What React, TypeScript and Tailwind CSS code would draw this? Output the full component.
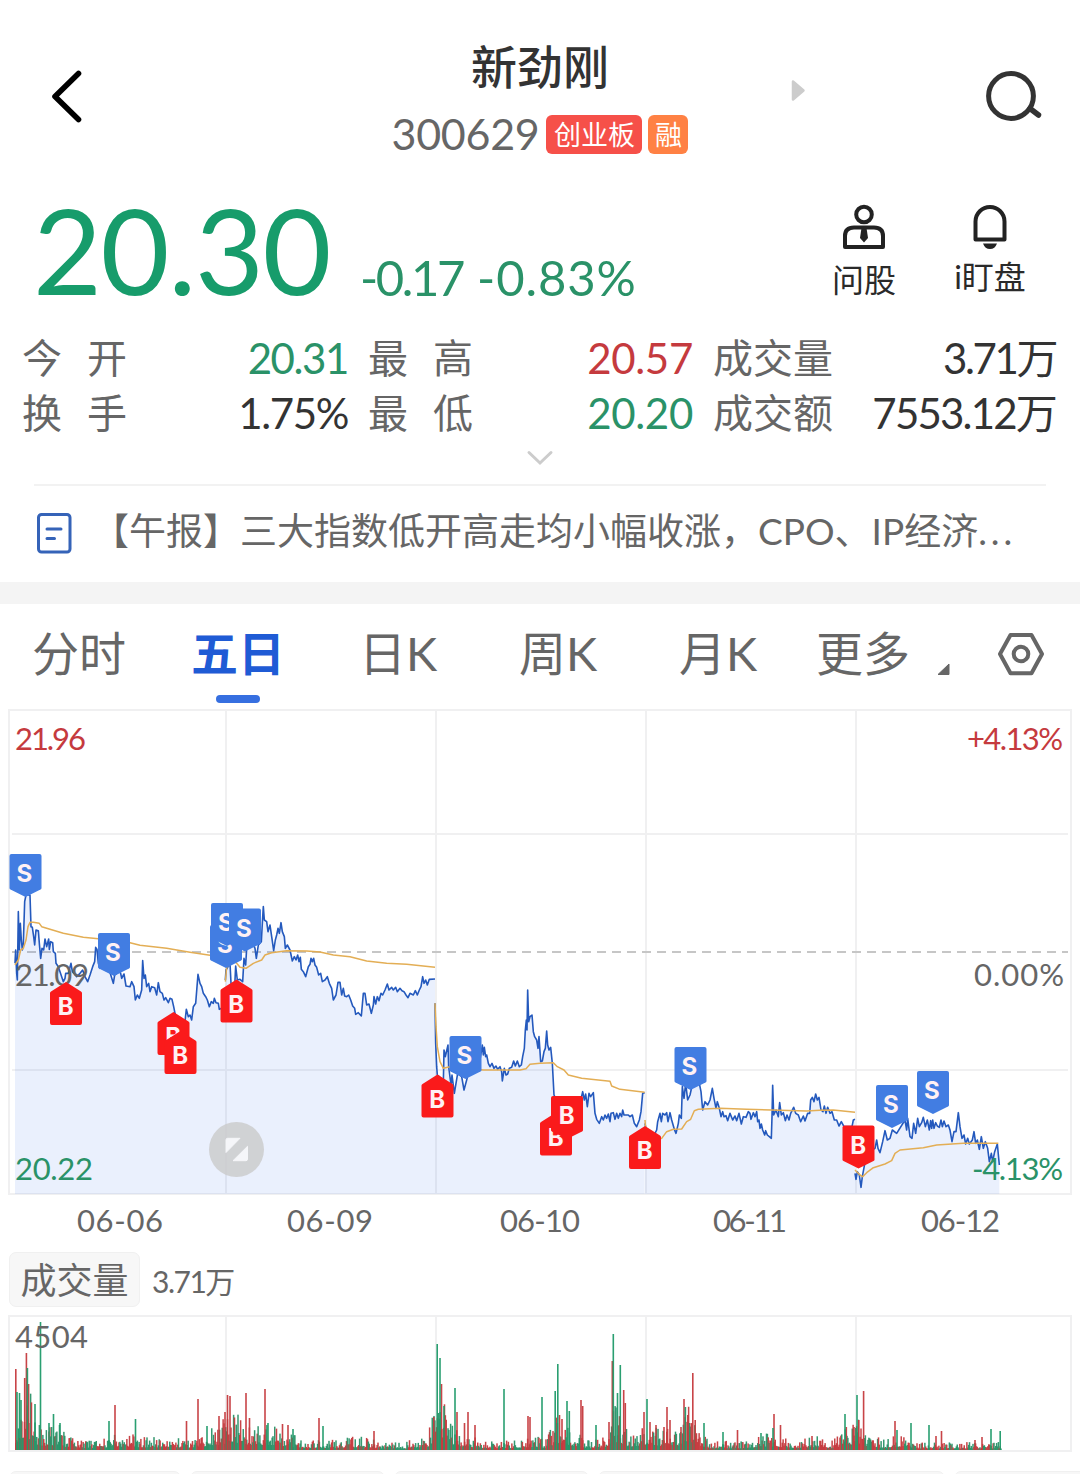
interface Segment {
  x: number;
  y: number;
  price: string;
  average: string;
}

interface Marker {
  x: number;
  y: number;
  side: "B" | "S";
  up?: boolean;
}

const GREEN = "#2a9268";
const RED = "#c53a3e";

// One entry per trading day, points are in thirds of a pixel from x / y
const segments: Segment[] = [
  {
    x: 0,
    y: 840,
    price:
      "45,370 47,330 50,400 52,420 55,215 58,330 61,250 64,300 67,330 70,310 74,185 78,165 90,165 93,260 97,262 101,290 104,315 108,270 115,272 118,310 122,355 126,325 131,330 135,297 140,320 146,297 148,328 152,305 158,308 160,335 166,340 168,370 175,380 180,395 185,410 190,425 195,415 197,400 205,400 213,370 217,395 222,400 230,410 240,400 248,390 255,410 263,425 270,405 278,380 284,365 287,322 291,328 295,370 300,385 305,350 312,340 340,430 344,405 358,395 362,400 365,415 372,402 378,438 390,440 395,425 402,440 406,480 412,465 418,475 425,450 428,362 432,415 436,405 440,440 446,430 450,455 455,440 464,443 470,465 475,428 480,455 487,460 492,480 497,473 505,488 510,475 516,478 521,500 525,520 540,560 555,545 559,508 565,530 570,525 575,540 580,500 587,490 594,403 600,430 605,440 610,460 617,470 622,480 628,500 634,485 640,490 643,475 648,488 655,490 658,508 665,505 676,500",
    average:
      "45,375 55,360 62,330 70,325 78,300 84,260 90,247 100,247 118,250 125,260 150,268 190,280 250,292 295,296 390,308 420,316 500,325 570,337 630,346 676,350",
  },
  {
    x: 200,
    y: 880,
    price:
      "76,300 78,270 90,250 93,310 104,320 107,258 112,300 120,298 128,305 132,235 137,255 140,205 150,170 165,205 169,235 175,195 184,185 187,130 190,80 193,120 200,125 204,155 210,135 215,170 221,212 226,180 230,165 234,145 238,160 243,128 247,155 253,170 256,205 262,195 270,210 277,243 283,230 288,240 293,225 297,245 301,232 304,268 310,275 317,290 325,260 330,253 333,235 337,245 341,235 345,255 350,262 356,285 362,280 367,305 375,300 382,290 388,310 395,325 400,360 408,345 414,307 420,307 425,345 430,325 434,348 440,350 446,345 452,360 458,378 464,385 467,403 475,398 484,408 490,340 495,340 500,375 507,372 514,400 520,375 522,350 527,372 532,350 537,362 543,340 548,345 555,330 562,312 567,330 575,322 580,330 587,322 592,335 600,325 606,332 612,335 618,345 624,353 630,340 640,345 646,332 652,345 658,330 663,320 668,290 672,310 677,300 682,315 688,298 705,297",
    average:
      "76,305 80,262 100,240 112,252 120,262 138,265 160,250 185,240 195,225 215,218 260,212 320,213 360,216 400,225 450,230 500,243 560,250 620,253 705,262",
  },
  {
    x: 420,
    y: 960,
    price:
      "45,130 47,250 50,320 52,345 58,350 70,370 72,270 76,290 84,255 86,320 93,375 96,345 103,400 108,370 113,340 125,350 132,390 140,360 150,320 165,290 180,300 187,255 190,285 193,262 197,290 200,285 205,310 210,320 216,310 222,325 228,318 233,328 240,320 245,335 247,363 253,325 258,345 263,342 268,325 275,322 281,303 286,318 292,303 298,320 304,315 308,290 313,265 316,210 319,180 321,210 323,90 326,185 330,170 336,165 340,215 344,230 350,240 354,265 357,230 362,305 367,303 372,275 376,265 380,213 383,255 387,270 392,262 397,310 402,405 420,440 480,430 488,395 493,420 497,402 502,440 507,400 512,410 520,398 525,460 530,478 538,490 545,470 550,480 555,465 560,475 565,462 570,485 573,460 580,458 585,478 590,460 595,475 600,460 605,470 608,450 612,465 625,465 630,470 637,465 643,490 650,500 658,480 663,455 668,400 674,398",
    average:
      "45,130 48,200 52,260 60,305 70,325 90,320 190,330 300,330 318,326 330,313 360,310 400,308 412,320 432,330 445,345 485,355 570,364 575,378 600,388 674,397",
  },
  {
    x: 640,
    y: 1020,
    price:
      "15,310 25,370 40,350 50,330 53,305 60,280 64,305 68,280 75,285 80,278 84,305 90,278 95,300 103,328 108,340 115,310 118,285 124,295 127,200 132,235 137,190 143,240 150,225 160,180 178,190 183,215 188,270 195,245 203,255 210,240 217,205 222,235 228,265 232,245 238,265 243,290 248,275 252,290 258,287 263,302 270,280 278,300 285,288 290,302 297,280 304,312 310,290 318,292 325,275 330,280 333,298 340,278 345,290 350,275 353,305 357,300 360,325 364,312 368,330 374,345 377,332 382,345 388,350 394,355 396,290 398,196 401,285 408,270 415,290 419,248 424,285 430,278 436,302 441,285 447,300 452,280 461,262 467,280 475,285 482,305 490,288 495,303 503,280 509,280 512,240 517,232 522,245 527,222 532,240 537,232 543,270 549,275 553,258 558,280 563,262 570,280 576,275 583,300 590,300 597,318 604,305 612,320 636,320 640,300 645,298",
    average:
      "15,300 20,370 40,365 65,355 80,335 100,328 125,327 140,305 152,298 163,272 175,268 240,265 320,268 420,271 500,273 540,271 580,270 645,277",
  },
  {
    x: 640,
    y: 1020,
    price:
      "645,460 648,478 652,455 658,465 663,502 667,470 680,400 705,385 710,360 714,385 720,398 728,365 735,332 742,360 750,355 757,330 770,340 795,300 800,330 803,295 810,350 816,355 821,310 827,340 833,295 838,320 845,308 850,292 856,320 862,300 868,330 872,302 875,325 878,300 882,325 887,308 892,318 898,322 903,300 907,320 912,303 918,320 925,315 930,330 936,365 942,335 948,335 955,278 960,320 966,355 972,345 977,372 983,355 988,372 997,360 1002,335 1007,370 1012,360 1018,388 1024,350 1030,385 1036,365 1043,385 1048,425 1054,400 1058,425 1064,395 1072,372 1078,435",
    average:
      "645,450 660,465 668,470 680,458 700,443 735,432 755,422 765,400 780,390 850,383 890,375 970,370 1075,370",
  },
];

const markers: Marker[] = [
  { x: 9.5, y: 854, side: "S" },
  { x: 98, y: 933, side: "S" },
  { x: 50, y: 982, side: "B", up: true },
  { x: 157.5, y: 1012, side: "B", up: true },
  { x: 164.5, y: 1031, side: "B", up: true },
  { x: 210, y: 925, side: "S" },
  { x: 211, y: 903, side: "S" },
  { x: 229, y: 908.5, side: "S" },
  { x: 220.5, y: 979.5, side: "B", up: true },
  { x: 421.5, y: 1074.5, side: "B", up: true },
  { x: 449.5, y: 1036, side: "S" },
  { x: 540, y: 1112.5, side: "B", up: true },
  { x: 551, y: 1096, side: "B" },
  { x: 629, y: 1126, side: "B", up: true },
  { x: 674.5, y: 1047, side: "S" },
  { x: 842.5, y: 1125.5, side: "B" },
  { x: 876, y: 1085, side: "S" },
  { x: 917, y: 1071, side: "S" },
];

// x:height of the usual volume, interpolated between the stops
const volumeLevels: [number, number][] = [
  [15, 28], [22, 44], [30, 42], [37, 20], [45, 16], [60, 20], [66, 11], [90, 7], [120, 13], [150, 10], [195, 9],
  [218, 20], [224, 24], [231, 34], [245, 20], [270, 20], [290, 12], [310, 7], [340, 9], [360, 11], [380, 6], [405, 6],
  [428, 14], [436, 46], [442, 50], [450, 20], [462, 14], [482, 8], [510, 7], [532, 12], [545, 8], [558, 28], [572, 16],
  [588, 7], [605, 10], [614, 34], [625, 16], [636, 12], [648, 24], [660, 16], [680, 18], [688, 34], [698, 16], [710, 7],
  [740, 7], [775, 14], [790, 7], [808, 10], [815, 12], [830, 7], [846, 17], [857, 28], [868, 12], [885, 8], [897, 13],
  [915, 6], [950, 6], [985, 6], [1001, 6],
];

const greenSpikes: [number, number][] = [
  [17, 58], [19.5, 57], [21, 50], [27.4, 82], [35, 46], [40.5, 128], [49, 27], [53.5, 36], [60, 27], [109, 29],
  [135.5, 31], [207, 24], [268, 27], [293, 21], [323, 24], [437.2, 106], [440, 92], [444, 44], [455, 62], [504, 61],
  [542, 53], [555.2, 59], [557.8, 86], [567, 49], [569.3, 39], [596, 25], [613.3, 116], [617.5, 57], [620.3, 85],
  [647, 51], [685.4, 43], [704, 27], [723, 18], [761, 17], [773, 22], [845, 36], [857, 55], [897, 20], [911, 27],
  [929, 25], [991, 21], [1000.2, 19],
];

const redSpikes: [number, number][] = [
  [15.8, 81], [24.7, 72], [26.4, 97], [28.6, 66], [115, 45], [186.5, 29], [198, 51], [219, 34], [225, 38], [227.5, 55],
  [230, 54], [246, 57], [249.5, 32], [265, 61], [282.5, 26], [288, 25], [319, 32], [374, 19], [433.8, 33], [441.5, 66],
  [457, 38], [464.5, 27], [468, 38], [475, 25], [528, 34], [530, 33], [559.5, 35], [562, 31], [581, 50], [582.7, 44],
  [609, 28], [612.3, 89], [623.7, 60], [625.3, 47], [644, 38], [650, 28], [656, 25], [664, 23], [667, 43], [670, 30],
  [681, 23], [684, 51], [687.8, 35], [692.8, 77], [695.2, 30], [737.5, 20], [774, 36], [780.5, 25], [812, 14], [846.3, 23],
  [854, 23], [858.8, 30], [863.6, 59], [895, 29], [936, 14], [941.5, 19], [975, 10], [982, 13],
];

function scale(points: string, x: number, y: number) {
  return points
    .split(" ")
    .map((p) => {
      const [px, py] = p.split(",").map(Number);
      return `${(x + px / 3).toFixed(2)},${(y + py / 3).toFixed(2)}`;
    })
    .join(" ");
}

function levelAt(x: number) {
  for (let i = 1; i < volumeLevels.length; i++) {
    const [x1, h1] = volumeLevels[i];
    const [x0, h0] = volumeLevels[i - 1];
    if (x <= x1) return h0 + ((h1 - h0) * (x - x0)) / (x1 - x0);
  }
  return 5;
}

function minuteBars() {
  const bars: { x: number; h: number; color: string }[] = [];
  let seed = 629;
  const next = () => {
    seed = (seed * 16807) % 2147483647;
    return seed / 2147483647;
  };
  let red = false;
  for (let x = 15; x < 1001; x += 0.875) {
    const r = next();
    if (next() > 0.6) red = !red;
    bars.push({ x, h: Math.max(1.5, levelAt(x) * (0.25 + 1.1 * r * r)), color: red ? RED : GREEN });
  }
  return bars;
}

function ArrowMarker({ x, y, side, up }: Marker) {
  return (
    <g transform={`translate(${x} ${y})`}>
      <path
        d={
          up
            ? "M16 0L31 9.5Q32 10 32 11V41Q32 43 30 43H2Q0 43 0 41V11Q0 10 1 9.5Z"
            : "M16 43L31 35.5Q32 35 32 34V2Q32 0 30 0H2Q0 0 0 2V34Q0 35 1 35.5Z"
        }
        fill={side === "B" ? "#fa1a1b" : "#427de2"}
      />
      <text
        x={side === "B" ? 15.8 : 14.8}
        y={up ? 33 : 28}
        textAnchor="middle"
        fontSize="24"
        className="fill-[#fff1f4] font-[Inter,sans-serif] font-bold"
      >
        {side}
      </text>
    </g>
  );
}

function PriceChart() {
  return (
    <svg className="block h-[536px] w-full" viewBox="0 708 1080 536">
      <g fill="none" stroke="#f0f0f1" strokeWidth="2">
        <rect x="9" y="710" width="1062" height="484" />
        <path d="M12 834H1068M12 1070H1068" />
        <path d="M226 710V1194M436 710V1194M646 710V1194M856 710V1194" />
      </g>
      <path d="M12 952H1068" stroke="#c6c6c6" strokeWidth="1.8" strokeDasharray="9 6" />
      {segments.map((s, i) => {
        const line = scale(s.price, s.x, s.y);
        const pts = line.split(" ");
        const start = pts[0].split(",")[0];
        const end = pts[pts.length - 1].split(",")[0];
        return (
          <g key={i} fill="none" strokeLinejoin="round">
            <polygon points={`${start},1194 ${line} ${end},1194`} fill="#3a6ff0" fillOpacity="0.105" />
            <polyline points={line} stroke="#2459bd" strokeWidth="1.6" />
            <polyline points={scale(s.average, s.x, s.y)} stroke="#e3ae55" strokeWidth="1.5" />
          </g>
        );
      })}
      <g fontSize="31" fill="#666">
        <text x="15" y="750" textLength="71" fill={RED}>21.96</text>
        <text x="967" y="750" textLength="96" fill={RED}>+4.13%</text>
        <text x="15" y="986" textLength="74">21.09</text>
        <text x="974" y="986" textLength="90">0.00%</text>
        <text x="15" y="1180" textLength="78" fill={GREEN}>20.22</text>
        <text x="972" y="1180" textLength="91" fill={GREEN}>-4.13%</text>
        <text x="77" y="1232" textLength="86">06-06</text>
        <text x="287" y="1232" textLength="86">06-09</text>
        <text x="500" y="1232" textLength="80">06-10</text>
        <text x="713" y="1232" textLength="74">06-11</text>
        <text x="921" y="1232" textLength="79">06-12</text>
      </g>
      {markers.map((m, i) => (
        <ArrowMarker key={i} {...m} />
      ))}
      <circle cx="236.5" cy="1149.5" r="27.5" fill="#cbcbcb" fillOpacity="0.82" />
      <path
        d="M227.5 1138.3H240L226 1152.5V1139.8Q226 1138.3 227.5 1138.3ZM247.5 1146.3V1159Q247.5 1160.7 246 1160.7H233Z"
        fill="#f5f6f9"
        stroke="#f5f6f9"
        strokeLinejoin="round"
      />
    </svg>
  );
}

function VolumeChart() {
  return (
    <svg className="block h-[140px] w-full" viewBox="0 1314 1080 140">
      <g fill="none" stroke="#f0f0f1" strokeWidth="2">
        <rect x="9" y="1316" width="1062" height="135" />
        <path d="M226 1316V1451M436 1316V1451M646 1316V1451M856 1316V1451" />
      </g>
      {minuteBars().map((b, i) => (
        <rect key={i} x={b.x} y={1450 - b.h} width="1.5" height={b.h} fill={b.color} fillOpacity="0.95" />
      ))}
      {redSpikes.map(([x, h]) => (
        <rect key={x} x={x - 0.8} y={1450 - h} width="1.6" height={h} fill={RED} fillOpacity="0.95" />
      ))}
      {greenSpikes.map(([x, h]) => (
        <rect key={x} x={x - 0.8} y={1450 - h} width="1.6" height={h} fill="#1f9a69" fillOpacity="0.95" />
      ))}
      <text x="15" y="1348" fontSize="31" textLength="73" fill="#666">
        4504
      </text>
    </svg>
  );
}

function Header() {
  return (
    <header className="flex h-[180px] items-start justify-between">
      <svg className="mt-[66px] ml-[48px] h-[62px] w-[40px]" viewBox="0 0 40 62" fill="none">
        <path d="M30.5 7.5L7 30.5L30.5 53.5" stroke="#000" strokeWidth="5.6" strokeLinecap="round" strokeLinejoin="round" />
      </svg>
      <div className="ml-[304px] flex w-[296px] shrink-0 flex-col items-center pt-[38px]">
        <h1 className="text-[46px] leading-[58px] font-medium text-[#333]">新劲刚</h1>
        <div className="mt-[16px] flex h-[44px] items-center">
          <span className="mr-[7px] text-[43px] leading-[44px] tracking-[-0.3px] text-[#666]">300629</span>
          <span className="mr-[6px] flex h-[39px] w-[96px] items-center justify-center rounded-[6px] bg-[#f65049] text-[27px] leading-none text-white">
            创业板
          </span>
          <span className="flex h-[39px] w-[40px] items-center justify-center rounded-[6px] bg-[#ff8144] text-[27px] leading-none text-white">
            融
          </span>
        </div>
      </div>
      <svg className="mt-[78px] ml-[103px] h-[25px] w-[16px]" viewBox="0 0 16 25">
        <path d="M2 3.5L12.5 12.5L2 21.5Z" fill="#ccc" stroke="#ccc" strokeWidth="2.5" strokeLinejoin="round" />
      </svg>
      <svg className="mt-[66px] mr-[34px] ml-auto h-[62px] w-[64px]" viewBox="0 0 64 62" fill="none" stroke="#333">
        <circle cx="29" cy="30" r="22.4" strokeWidth="5" />
        <path d="M48 42.5L56.5 49" strokeWidth="5.5" strokeLinecap="round" />
      </svg>
    </header>
  );
}

function Quote() {
  return (
    <section className="flex h-[150px] items-start">
      <div className="w-[326px] pt-[9px] pl-[33px] text-[119px] leading-[120px] tracking-[-1.4px] whitespace-nowrap text-[#179c6b]">20.30</div>
      <div className="mt-[67px] ml-[34px] flex w-[300px] gap-[14px] text-[49px] leading-[60px] whitespace-nowrap text-[#2a9268]">
        <span className="tracking-[-2.4px]">-0.17</span>
        <span className="tracking-[0.9px]">-0.83%</span>
      </div>
      <div className="ml-auto flex pr-[42px] text-[#2a2a2a]">
        <div className="flex w-[96px] flex-col items-center pt-[23px]">
          <svg className="h-[48px] w-[46px]" viewBox="0 0 46 48" fill="none" stroke="#222" strokeWidth="4">
            <circle cx="23" cy="11.5" r="7.8" />
            <path d="M4 44V33Q4 24.500 13 24.500H33Q42 24.500 42 33V44Z" strokeLinejoin="round" />
            <path d="M20.500 25H25.500L27 35L23 39.500L19 35Z" fill="#222" stroke="none" />
          </svg>
          <span className="mt-[9px] text-[32px] leading-[40px]">问股</span>
        </div>
        <div className="ml-[30px] flex w-[96px] flex-col items-center pt-[23px]">
          <svg className="h-[46px] w-[40px]" viewBox="0 0 40 46" fill="none" stroke="#222" strokeWidth="4">
            <path d="M5.500 36.500V18.500A14.500 14.500 0 0 1 34.500 18.500V36.500Z" strokeLinejoin="round" />
            <path d="M13 40.500H27Q25 46 20 46Q15 46 13 40.500Z" fill="#222" stroke="none" />
          </svg>
          <span className="mt-[8px] text-[32px] leading-[40px] whitespace-nowrap">i盯盘</span>
        </div>
      </div>
    </section>
  );
}

interface StatProps {
  label: string;
  value: string;
  color: string;
}

function Stat({ label, value, color }: StatProps) {
  return (
    <div className="flex items-center justify-between leading-[55px] whitespace-nowrap">
      <span className="text-[40px] text-[#666]">
        {label.split(" ").map((part, i) => (
          <span key={i} className={i > 0 ? "ml-[25px]" : ""}>
            {part}
          </span>
        ))}
      </span>
      <span className={"text-[42px] " + color}>{value}</span>
    </div>
  );
}

function Stats() {
  return (
    <section className="grid h-[110px] grid-cols-[326px_325px_343px] gap-x-[20px] pt-[1px] pl-[22px]">
      <Stat label="今 开" value="20.31" color="tracking-[-1.4px] text-[#2a9268]" />
      <Stat label="最 高" value="20.57" color="tracking-[-0.3px] text-[#c53a3e]" />
      <Stat label="成交量" value="3.71万" color="tracking-[-2.4px] text-[#333]" />
      <Stat label="换 手" value="1.75%" color="tracking-[-1.4px] text-[#333]" />
      <Stat label="最 低" value="20.20" color="tracking-[-0.3px] text-[#2a9268]" />
      <Stat label="成交额" value="7553.12万" color="tracking-[-1.8px] text-[#333]" />
    </section>
  );
}

function News() {
  return (
    <section className="mx-[34px] flex h-[98px] items-center border-t-2 border-[#f2f2f2] pb-[2px]">
      <svg className="ml-[2px] h-[42px] w-[36px]" viewBox="0 0 36 42" fill="none" stroke="#3563b8" strokeWidth="3" strokeLinecap="round">
        <rect x="2.500" y="2.500" width="31.500" height="37.500" rx="3" />
        <path d="M11 17H25M11 26.500H18.500" />
      </svg>
      <p className="mb-[5px] ml-[20px] text-[37px] leading-[50px] whitespace-nowrap text-[#666]">
        【午报】三大指数低开高走均小幅收涨，CPO、IP经济<span className="tracking-[4px]">...</span>
      </p>
    </section>
  );
}

function Tabs() {
  const tabs = ["分时", "五日", "日K", "周K", "月K"];
  return (
    <nav className="flex h-[104px] text-[47px] leading-[60px] text-[#666]">
      {tabs.map((tab, i) => (
        <div key={tab} className={"flex shrink-0 flex-col items-center pt-[19px] " + (i === 0 ? "w-[158px]" : "w-[160px]")}>
          <span className={i === 1 ? "font-bold text-[#1f5bd5]" : ""}>{tab}</span>
          {i === 1 && <span className="mt-[12px] h-[8px] w-[44px] rounded-full bg-[#366fe0]" />}
        </div>
      ))}
      <div className="ml-[18px] flex shrink-0 pt-[19px]">
        更多
        <svg className="mt-[39px] ml-[27px] h-[14px] w-[13px]" viewBox="0 0 13 14">
          <path d="M12 2V12.500H1Z" fill="#666" stroke="#666" strokeLinejoin="round" />
        </svg>
      </div>
      <svg className="mt-[26px] ml-[47px] h-[48px] w-[48px]" viewBox="0 0 48 48" fill="none" stroke="#666" strokeWidth="4">
        <path d="M13.500 5H34.500L45 24L34.500 43.300H13.500L3 24Z" strokeLinejoin="round" />
        <circle cx="24" cy="24" r="7.300" />
      </svg>
    </nav>
  );
}

export default function App() {
  return (
    <div className="flex h-[1474px] w-[1080px] flex-col overflow-hidden bg-white font-[Lato,'Noto_Sans_CJK_SC',sans-serif] *:shrink-0">
      <Header />
      <Quote />
      <Stats />
      <div className="flex h-[44px] justify-center pt-[9px]">
        <svg className="h-[18px] w-[28px]" viewBox="0 0 28 18" fill="none">
          <path d="M3 3.500L14 14L25 3.500" stroke="#ccc" strokeWidth="3" strokeLinecap="round" />
        </svg>
      </div>
      <News />
      <div className="h-[22px] bg-[#f4f4f4]" />
      <Tabs />
      <PriceChart />
      <div className="flex h-[70px] items-start pt-[8px] pl-[9px] text-[#666]">
        <span className="flex h-[55px] w-[131px] items-center justify-center rounded-[7px] border border-[#f0f0f0] bg-[#f7f7f7] text-[36px]">
          成交量
        </span>
        <span className="ml-[12px] text-[30px] leading-[58px] tracking-[-1.5px]">3.71万</span>
      </div>
      <VolumeChart />
      <div className="mt-[17px] flex gap-[9px] pl-[9px]">
        {["w-[172px]", "w-[195px]", "w-[195px]", "w-[347px]", "w-[140px]"].map((w, i) => (
          <div key={i} className={"h-[54px] shrink-0 rounded-[7px] border border-[#f0f0f0] bg-[#f7f7f7] " + w} />
        ))}
      </div>
    </div>
  );
}
